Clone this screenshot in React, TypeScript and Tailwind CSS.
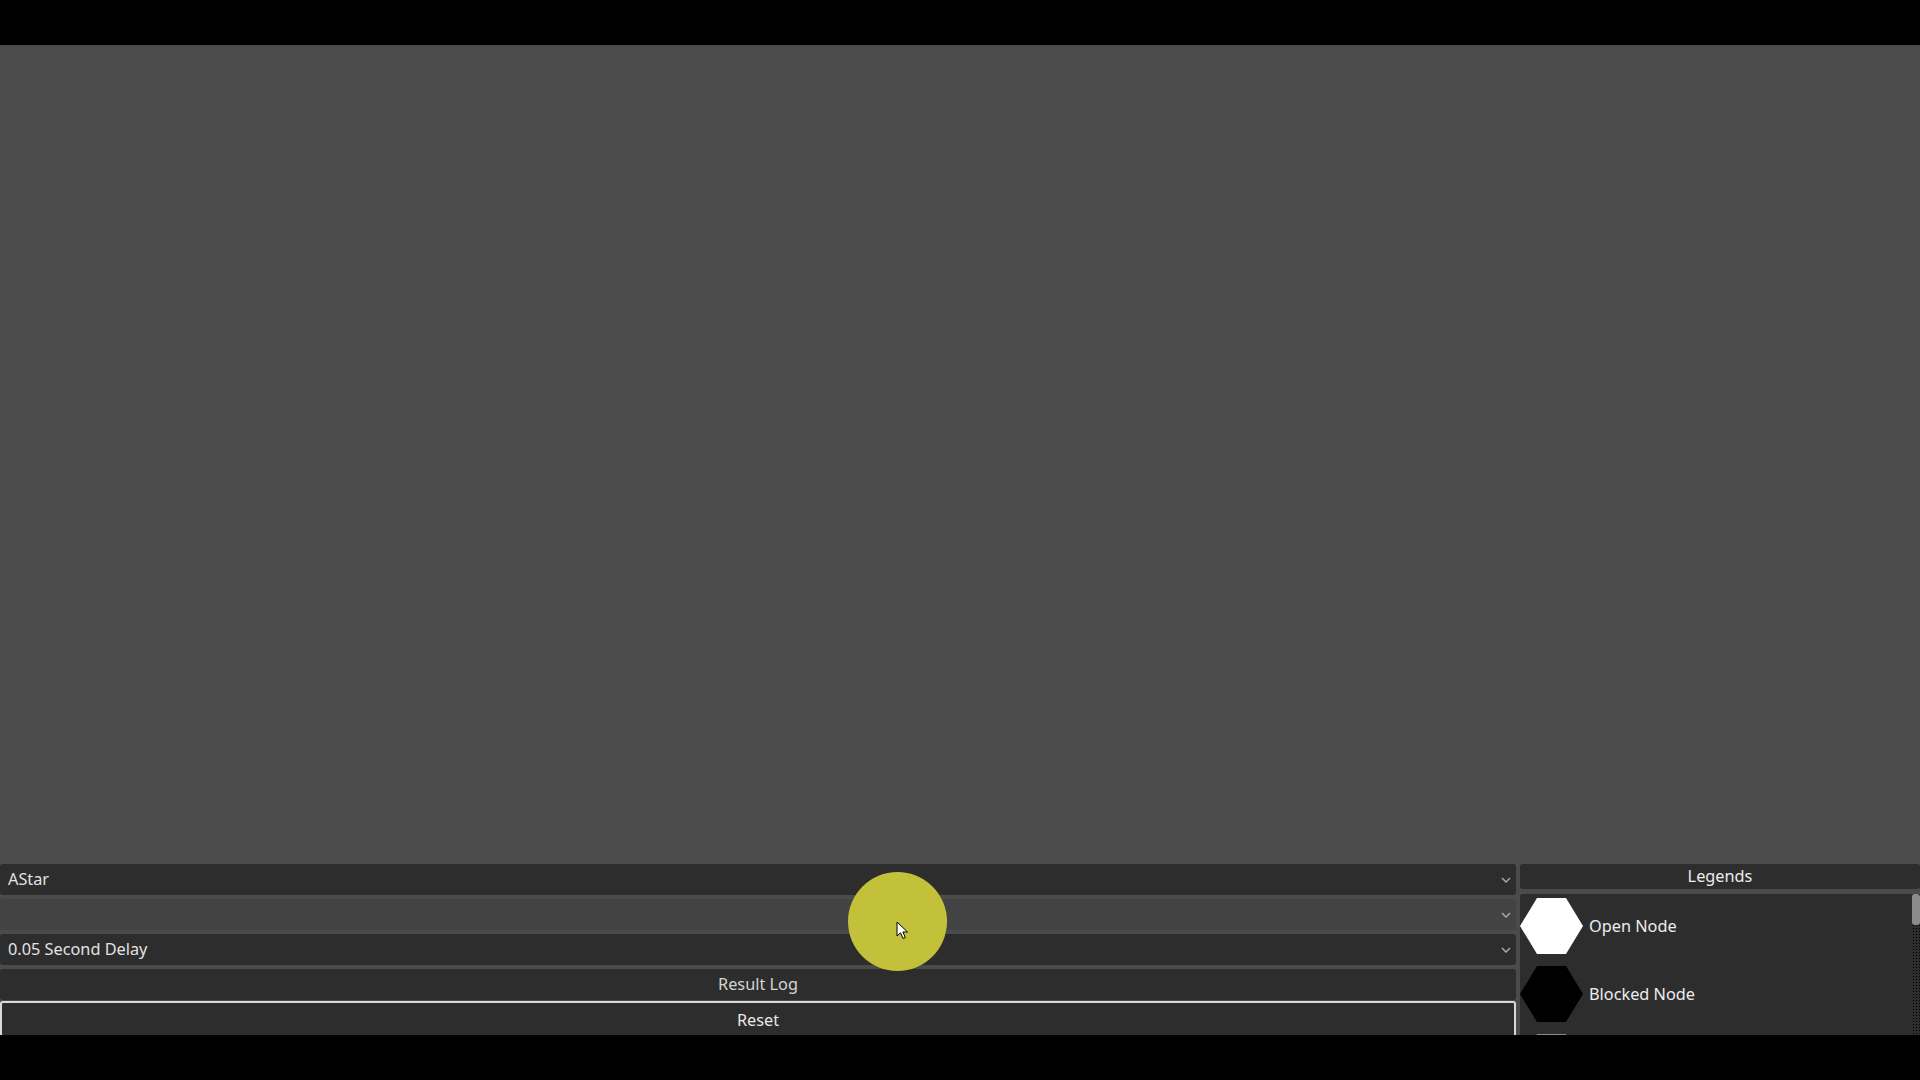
import React from "react";

function Chevron() {
  return (
    <svg width="10" height="6" viewBox="0 0 10 6" className="shrink-0">
      <path d="M1 1 L5 5 L9 1" fill="none" stroke="#a8a8a8" strokeWidth="1.5" />
    </svg>
  );
}

function OptionRow({ label, dim }: { label: string; dim?: boolean }) {
  return (
    <div
      className={`h-[31px] shrink-0 flex items-center justify-between pl-2 pr-[5px] rounded-[3px] ${
        dim ? "bg-[#434343]" : "bg-[#2d2d2d]"
      }`}
    >
      <span className="text-[16.3px] text-[#e2e2e2] leading-none">{label}</span>
      <Chevron />
    </div>
  );
}

function Hex({ color }: { color: string }) {
  return (
    <svg width="63" height="56" viewBox="0 0 63 56" className="shrink-0">
      <polygon points="0,28 17,0 46,0 63,28 46,56 17,56" fill={color} />
    </svg>
  );
}

// third entry only peeks in at the bottom edge
const legends = [
  { name: "Open Node", color: "#ffffff" },
  { name: "Blocked Node", color: "#000000" },
  { name: "", color: "#8a8a8a" },
];

export default function App() {
  return (
    <div className="w-[1920px] h-[1080px] bg-black flex flex-col overflow-hidden font-['Noto_Sans',sans-serif]">
      <div className="h-[45px] shrink-0" />

      <div className="relative h-[990px] shrink-0 bg-[#4b4b4b] flex flex-col overflow-hidden">
        {/* grid canvas (empty) */}
        <div className="flex-1" />

        {/* control panel */}
        <div className="h-[171px] shrink-0 flex gap-1">
          <div className="w-[1516px] flex flex-col">
            <div className="flex flex-col gap-1">
              <OptionRow label="AStar" />
              <OptionRow label="" dim />
              <OptionRow label="0.05 Second Delay" />
              <div className="h-[31px] flex items-center justify-center rounded-[3px] bg-[#2d2d2d]">
                <span className="text-[16.3px] text-[#d4d4d4] leading-none">Result Log</span>
              </div>
            </div>
            <div className="mt-px h-[38px] shrink-0 flex items-center justify-center rounded-[3px] bg-[#2d2d2d] border-2 border-[#d9d9d9]">
              <span className="text-[16.3px] text-[#e8e8e8] leading-none">Reset</span>
            </div>
          </div>

          <div className="flex-1 flex flex-col gap-[5px]">
            <div className="h-[25px] shrink-0 flex items-center justify-center rounded-[3px] bg-[#2d2d2d]">
              <span className="text-[16.3px] text-[#ececec] leading-none">Legends</span>
            </div>
            <div className="flex-1 flex bg-[#2d2d2d] rounded-t-[3px] overflow-hidden">
              <div className="flex-1 flex flex-col gap-3 pt-1">
                {legends.map((l, i) => (
                  <div key={i} className="flex items-center gap-[6px]">
                    <Hex color={l.color} />
                    {l.name && (
                      <span className="text-[16.3px] text-[#ededed] leading-none">{l.name}</span>
                    )}
                  </div>
                ))}
              </div>
              <div className="w-2 shrink-0 flex flex-col bg-[radial-gradient(#000_0.8px,transparent_0.9px)] bg-[length:3px_3px]">
                <div className="h-[31px] rounded-[3px] bg-[#8c8c8c]" />
              </div>
            </div>
          </div>
        </div>

        {/* click highlight from the screen recorder */}
        <div className="absolute left-[848px] top-[827px] w-[99px] h-[99px] rounded-full bg-[#c3c13a]" />
        <svg
          className="absolute left-[896px] top-[876px]"
          width="13"
          height="19"
          viewBox="0 0 13 19"
        >
          <path
            d="M1 1 L1 15 L4.5 11.8 L7 17.5 L9.3 16.5 L6.9 11 L11.5 11 Z"
            fill="#ffffff"
            stroke="#000000"
            strokeWidth="1"
            strokeLinejoin="round"
          />
        </svg>
      </div>

      <div className="flex-1" />
    </div>
  );
}
